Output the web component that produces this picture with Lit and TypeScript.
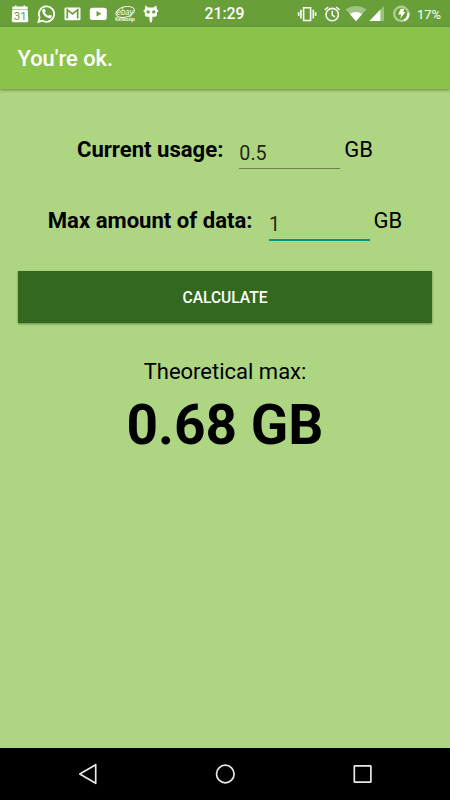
import { LitElement, html, css, svg } from "lit";
import { customElement, property } from "lit/decorators.js";

@customElement("status-bar")
class StatusBar extends LitElement {
  static styles = css`
    :host { display: grid; grid-template-columns: 1fr auto 1fr; align-items: center; height: 27px; background: #689f38; color: #fff; font: 500 16px/27px Roboto, sans-serif; flex: none; }
    svg { display: block; flex: none; height: 27px; overflow: visible; }
    .clock { margin-right: 1px; padding-top: 1px; font-size: 15.800px; line-height: 26px; }
    .left, .right { display: flex; align-items: center; height: 27px; }
    .left { padding-left: 11px; gap: 8px; }
    .right { justify-content: flex-end; padding-right: 9px; }
    .level { width: 24px; margin-left: 7px; padding-top: 1px; font-size: 13px; font-weight: 400; white-space: nowrap; }
    .cal { font: 400 11.500px Roboto, sans-serif; fill: #689f38; }
    .ebay { font: italic 400 9px "Liberation Sans", sans-serif; fill: #fff; }
    .tiny { font: 700 4.600px "Liberation Sans", sans-serif; fill: #fff; }
  `;
  icon(width: number, body: unknown) {
    return html`<svg width=${width} height="27" viewBox="0 0 ${width} 27" fill="none">${body}</svg>`;
  }
  render() {
    return html`
      <div class="left">
        ${this.icon(18, svg`<path fill="#fff" d="M1.300 6.500H4V5.500h1.500v1h7V5.500H14v1h2.700v3H1.300zM1.300 10h15.400l.6 11-1 1.200H1.700L.7 21z"/><text class="cal" x="9.200" y="19.500" text-anchor="middle">31</text>`)}
        ${this.icon(18, svg`<path stroke="#fff" stroke-width="1.700" d="M1.400 21.900l1.200-4.500A7.700 7.700 0 1 1 5.500 20.600z"/><path fill="#fff" d="M6.300 9.100c.6-.6 1.300-.5 1.600.1l.8 1.900c.1.500-.5 1-.9 1.500.8 1.600 1.900 2.500 3.500 3.200.5-.5.900-1.300 1.400-1.100l1.900.9c.7.4-.1 2-1 2.400-2.200 1-8.400-2.400-8.400-7 0-.8.500-1.500 1.100-1.900z"/>`)}
        ${this.icon(18, svg`<rect x="1.500" y="7.500" width="16" height="12.700" rx="1.300" fill="#fff"/><path stroke="#689f38" stroke-width="1.700" d="M4.300 18.500V9.700l5.200 4.200 5.200-4.200v8.800"/>`)}
        ${this.icon(18, svg`<rect x=".8" y="7.800" width="17" height="12.200" rx="2.800" fill="#fff"/><path fill="#689f38" d="M7.500 11v5.600l5-2.800z"/>`)}
        ${this.icon(20, svg`<ellipse cx="10.200" cy="12" rx="9.500" ry="5.200" stroke="#fff" stroke-width=".9" transform="rotate(-14 10 12)"/><text class="ebay" x="1.700" y="14.800" textLength="16.500" lengthAdjust="spacingAndGlyphs">ebay</text><text class="tiny" x=".3" y="21" textLength="19.500" lengthAdjust="spacingAndGlyphs">Kleinanzeige</text>`)}
        ${this.icon(16, svg`<path fill="#fff" d="M2.500 5.200l2.700 2.200h5.400l2.700-2.200.7 4.300 1.300.7v1.300l-1.300.6v2.700q0 2-2 2H9.400v1q0 4.700-1.500 4.700T6.400 17.800v-1H3.800q-2 0-2-2v-2.700L.5 11.500v-1.300l1.300-.7z"/><circle cx="5.100" cy="11.900" r="1.600" fill="#689f38"/><circle cx="10.700" cy="11.900" r="1.600" fill="#689f38"/>`)}
      </div>
      <div class="clock">21:29</div>
      <div class="right">
        ${this.icon(26, svg`<path stroke="#fff" stroke-width="1.600" d="M6.600 7.800h7v12.700h-7zM3.900 9.800v8.600M16.300 9.800v8.600M1.600 12.200v3.800M18.600 12.200v3.800"/>`)}
        ${this.icon(22, svg`<circle cx="9.200" cy="14.600" r="6.200" stroke="#fff" stroke-width="1.600"/><path stroke="#fff" stroke-width="1.400" d="M9.200 10.800v4.300l2.800 1.800M1.800 9.900l3.500-2.900M16.600 9.900L13.100 7"/>`)}
        ${this.icon(24, svg`<path fill="#fff" fill-opacity=".38" d="M.5 9.300Q11 2.500 21.500 9.300L11 21.200z"/><path fill="#fff" d="M4.800 13.900Q11 10 17.200 13.900L11 21.200z"/>`)}
        ${this.icon(22, svg`<path fill="#fff" fill-opacity=".35" d="M15 6v15H.5z"/><path fill="#fff" d="M11.300 9.700V21H.5z"/>`)}
        ${this.icon(19, svg`<circle cx="10.300" cy="13.800" r="7.100" stroke="#fff" stroke-opacity=".48" stroke-width="2.300"/><path stroke="#fff" stroke-width="2.300" d="M17.300 13a7.100 7.100 0 0 1-4.300 7.400"/><path fill="#fff" d="M9.700 8.800h3.500l-.8 3.300h2L9.200 18.800l1-4.200H7.100z"/>`)}
        <div class="level">17%</div>
      </div>`;
  }
}

@customElement("amount-row")
class AmountRow extends LitElement {
  @property() label = "";
  @property() value = "";
  @property({ type: Boolean, reflect: true }) active = false;
  static styles = css`
    :host { display: flex; justify-content: center; align-items: flex-start; height: 71px; font: 400 22px/26px Roboto, sans-serif; color: #000; }
    .label { font-size: 22.100px; line-height: 25px; font-weight: 700; white-space: nowrap; }
    .field { box-sizing: border-box; width: 101px; height: 32px; margin: 0 4.500px 0 15.500px; padding: 4px 0 0 .5px; font-size: 19.700px; color: #1f2818; border-bottom: 1px solid #6b8054; }
    :host([active]) .field { height: 33px; margin: 0 4px 0 16px; border-bottom: 2px solid #009688; }
  `;
  render() {
    return html`<span class="label">${this.label}</span><span class="field">${this.value}</span><span>GB</span>`;
  }
}

@customElement("app-root")
class AppRoot extends LitElement {
  static styles = css`
    :host { display: flex; flex-direction: column; width: 450px; height: 800px; overflow: hidden; background: #aed581; font-family: Roboto, sans-serif; }
    header { flex: none; height: 62px; box-sizing: border-box; padding: 0 17.500px; background: #8bc34a; color: #fff; font: 500 21.900px/63px Roboto, sans-serif; box-shadow: 0 1px 3px rgba(0, 0, 0, .4); }
    main { flex: 1; padding: 48px 17.500px 0; display: flex; flex-direction: column; }
    .calc { display: block; border: 0; padding: 0; margin: -8px .3px 0; height: 52px; background: #33691e; color: #fff; font: 500 15.600px/54px Roboto, sans-serif; box-shadow: 0 1px 2px rgba(0, 0, 0, .4); }
    .caption { margin-top: 36px; text-align: center; font-size: 22px; line-height: 26px; }
    .result { margin-top: 8px; text-align: center; font-size: 55px; font-weight: 700; line-height: 64px; }
    nav { flex: none; height: 52px; background: #000; display: flex; justify-content: space-between; padding: 0 78px; align-items: center; }
    nav svg { display: block; }
  `;
  render() {
    return html`
      <status-bar></status-bar>
      <header>You're ok.</header>
      <main>
        <amount-row label="Current usage:" value="0.5"></amount-row>
        <amount-row label="Max amount of data:" value="1" active></amount-row>
        <button class="calc">CALCULATE</button>
        <div class="caption">Theoretical max:</div>
        <div class="result">0.68 GB</div>
      </main>
      <nav>
        <svg width="20" height="22" fill="none" stroke="#e8e8e8" stroke-width="1.700" stroke-linejoin="round"><path d="M1.800 11L17.700 1.700v18.600z"/></svg>
        <svg width="22" height="22" fill="none" stroke="#e8e8e8" stroke-width="1.700"><circle cx="11.300" cy="11" r="8.800"/></svg>
        <svg width="20" height="22" fill="none" stroke="#e8e8e8" stroke-width="1.700"><rect x="2.300" y="2.800" width="16.600" height="16.400" rx=".5"/></svg>
      </nav>`;
  }
}
